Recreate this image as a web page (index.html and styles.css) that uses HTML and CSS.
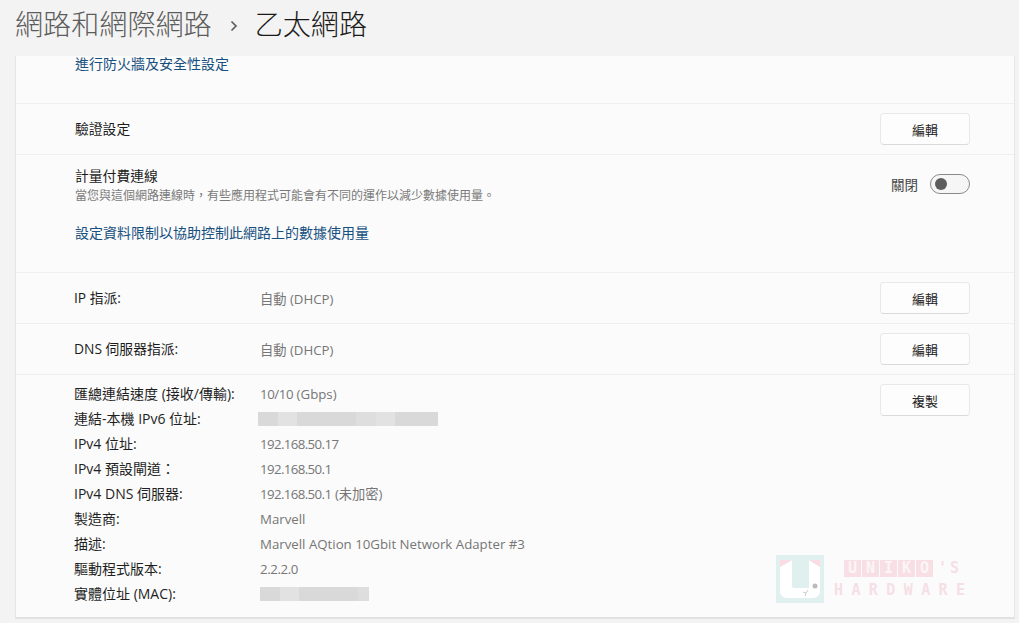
FILE: index.html
```html
<!DOCTYPE html>
<html lang="zh-Hant">
<head>
<meta charset="utf-8">
<title>乙太網路</title>
<link rel="stylesheet" href="styles.css">
</head>
<body>
<header class="crumb">
  <span class="crumb-parent">網路和網際網路</span>
  <svg class="crumb-sep" width="10" height="12" viewBox="0 0 10 12"><path d="M2.500 1.500 7 6l-4.500 4.500" fill="none" stroke="#5d5d5d" stroke-width="1.700"/></svg>
  <span class="crumb-current">乙太網路</span>
</header>
<main class="card">
  <section class="row row-fw"><a class="link link-fw">進行防火牆及安全性設定</a></section>
  <section class="row row-btn">
    <span class="label grow">驗證設定</span>
    <button class="btn">編輯</button>
  </section>
  <section class="row row-metered">
    <div class="metered-text">
      <div class="label">計量付費連線</div>
      <div class="sub">當您與這個網路連線時，有些應用程式可能會有不同的運作以減少數據使用量。</div>
      <a class="link link-limit">設定資料限制以協助控制此網路上的數據使用量</a>
    </div>
    <div class="toggle-wrap">
      <span class="toggle-label">關閉</span>
      <span class="toggle"><span class="knob"></span></span>
    </div>
  </section>
  <section class="row row-btn">
    <span class="label key">IP 指派:</span>
    <span class="value grow">自動 (DHCP)</span>
    <button class="btn">編輯</button>
  </section>
  <section class="row row-btn">
    <span class="label key">DNS 伺服器指派:</span>
    <span class="value grow">自動 (DHCP)</span>
    <button class="btn">編輯</button>
  </section>
  <section class="details">
    <dl class="grid">
      <dt>匯總連結速度 (接收/傳輸):</dt><dd><span class="num-slight">10/10</span> (Gbps)</dd>
      <dt>連結-本機 IPv6 位址:</dt><dd><span class="blur blur-v6"></span></dd>
      <dt>IPv4 位址:</dt><dd><span class="num">192.168.50.17</span></dd>
      <dt>IPv4 預設閘道：</dt><dd><span class="num">192.168.50.1</span></dd>
      <dt>IPv4 DNS 伺服器:</dt><dd><span class="num">192.168.50.1</span> (未加密)</dd>
      <dt>製造商:</dt><dd>Marvell</dd>
      <dt>描述:</dt><dd>Marvell AQtion 10Gbit Network Adapter #3</dd>
      <dt>驅動程式版本:</dt><dd><span class="num-slight">2.2.2.0</span></dd>
      <dt>實體位址 (MAC):</dt><dd><span class="blur blur-mac"></span></dd>
    </dl>
    <button class="btn">複製</button>
  </section>
</main>
<div class="watermark">
  <svg class="wm-logo" width="48" height="48" viewBox="0 0 48 48">
    <rect width="48" height="48" fill="#dff0ef"/>
    <path d="M4 12 16 5v26c0 1 1 2 2 2h15V5l11 7v24c0 4-3 7-7 7H11c-4 0-7-3-7-7z" fill="#fff"/>
    <path d="M4 12 16 5H4zM33 5h11v7z" fill="#fadde4"/>
    <circle cx="39" cy="31" r="2.500" fill="#bbb"/>
    <path d="M27 37l3 1 2-3M30 38l-1 3" fill="none" stroke="#ccc" stroke-width="1"/>
  </svg>
  <div class="wm-text">
    <div class="wm-line1"><span class="wm-box">U</span><span class="wm-box">N</span><span class="wm-box">I</span><span class="wm-box">K</span><span class="wm-box">O</span><span class="wm-tail">'S</span></div>
    <div class="wm-line2">HARDWARE</div>
  </div>
</div>
</body>
</html>
```
FILE: styles.css
```css
* { box-sizing: border-box; }
html, body { height: 100%; }
body {
  margin: 0;
  height: 623px;
  overflow: hidden;
  position: relative;
  background: #f3f3f3;
  color: #1b1b1b;
  font-family: "Open Sans", "Noto Sans CJK TC", sans-serif;
  font-size: 13px;
}
.crumb {
  height: 56px;
  padding: 6px 0 0 15px;
  display: flex;
  align-items: flex-start;
  font-size: 28.100px;
  line-height: 36px;
  font-weight: 300;
}
.crumb-parent { color: #5c5c5c; }
.crumb-sep { margin: 14px 16px 0 17px; }
.crumb-current { color: #1a1a1a; }
.card {
  margin: 0 4px 0 15px;
  height: 563px;
  background: #fbfbfb;
  border: 1px solid #e6e6e6;
  border-top: 0;
  border-bottom: 2px solid #e2e2e2;
}
.row { display: flex; border-bottom: 1px solid #efefef; padding: 0 44px 0 59px; }
.row-fw { height: 48px; padding-left: 59px; }
.row-btn { height: 51px; align-items: center; }
.row-metered { height: 118px; align-items: flex-start; justify-content: space-between; }
.label { font-size: 13.800px; color: #1b1b1b; line-height: 18px; }
.key { width: 186px; margin-left: -1px; }
.grow { flex: 1; }
.value { color: #767676; font-size: 13.250px; }
.link { color: #17507f; font-size: 14px; line-height: 18px; display: block; }
.link-fw { margin-top: -1px; }
.link-limit { margin-top: 20px; }
.metered-text { padding-top: 12px; }
.sub { font-size: 12px; color: #7a7a7a; line-height: 16px; margin-top: 3px; white-space: nowrap; }
.btn {
  width: 90px;
  height: 32px;
  background: #fdfdfd;
  border: 1px solid #e8e8e8;
  border-bottom-color: #dadada;
  border-radius: 4px;
  font: inherit;
  font-size: 13px;
  color: #222;
  padding: 0;
  flex: none;
}
.toggle-wrap { display: flex; align-items: center; gap: 12px; margin-top: 19px; }
.toggle-label { font-size: 13.500px; color: #444; }
.toggle {
  width: 40px;
  height: 20px;
  border: 1px solid #8a8a8a;
  border-radius: 10px;
  background: #f6f6f6;
  display: flex;
  align-items: center;
  padding-left: 4px;
}
.knob { width: 12px; height: 12px; border-radius: 50%; background: #5d5d5d; }
.details { display: flex; justify-content: space-between; align-items: flex-start; padding: 6px 44px 0 58px; }
.grid {
  margin: 0;
  display: grid;
  grid-template-columns: 186px 1fr;
  grid-auto-rows: 25px;
  align-items: center;
  line-height: 18px;
}
.grid dt { font-size: 14px; color: #1f1f1f; white-space: nowrap; }
.grid dd { margin: 0; font-size: 13.250px; color: #767676; white-space: nowrap; }
.num { letter-spacing: -0.600px; }
.num-slight { letter-spacing: -0.400px; }
.blur { display: block; height: 14px; background: linear-gradient(90deg, #d9d9d9 0 20px, #e2e2e2 20px 39px, #d9d9d9 39px 98px, #dedede 98px 118px, #e2e2e2 118px 137px, #d9d9d9 137px); }
.blur-v6 { width: 180px; margin-left: -2px; }
.blur-mac { width: 109px; }
.details .btn { margin-top: 3px; }
.watermark {
  position: absolute;
  left: 776px;
  top: 555px;
  display: flex;
  gap: 8px;
}
.wm-text { font-family: "DejaVu Sans Mono", monospace; font-weight: 700; color: #f6dfe6; font-size: 15px; }
.wm-line1 { display: flex; margin: 5px 0 0 12px; line-height: 17px; }
.wm-box { width: 17px; text-align: center; background: #f8dfe6; color: #fbf5f7; margin-right: 1px; }
.wm-tail { letter-spacing: 3px; margin-left: 4px; }
.wm-line2 { letter-spacing: 8.400px; line-height: 17px; margin: 5px 0 0 2px; }
```
